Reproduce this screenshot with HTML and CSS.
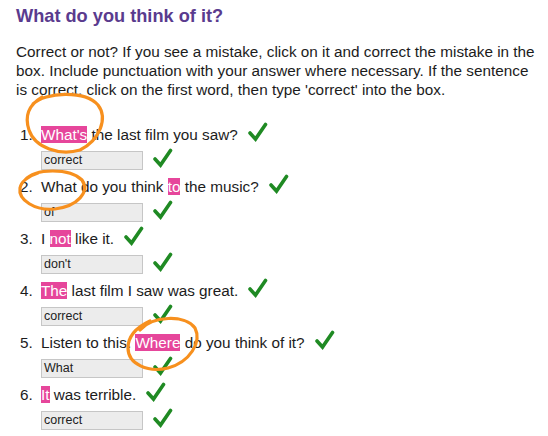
FILE: index.html
```html
<!DOCTYPE html>
<html>
<head>
<meta charset="utf-8">
<link rel="stylesheet" href="styles.css">
</head>
<body>
<div class="page">
  <h2 class="title">What do you think of it?</h2>
  <p class="intro">Correct or not? If you see a mistake, click on it and correct the mistake in the box. Include punctuation with your answer where necessary. If the sentence<br>is correct, click on the first word, then type 'correct' into the box.</p>
  <ol class="items">
    <li class="item">
      <div class="sentence"><span class="num">1.</span><span class="words"><span class="hl">What's</span> the last film you saw?</span><svg class="check" viewBox="0 0 20 20"><path d="M2 11 L7.5 17 L17.5 2.5"/></svg></div>
      <div class="answer"><span class="box">correct</span><svg class="check" viewBox="0 0 20 20"><path d="M2 11 L7.5 17 L17.5 2.5"/></svg></div>
    </li>
    <li class="item">
      <div class="sentence"><span class="num">2.</span><span class="words">What do you think <span class="hl">to</span> the music?</span><svg class="check" viewBox="0 0 20 20"><path d="M2 11 L7.5 17 L17.5 2.5"/></svg></div>
      <div class="answer"><span class="box">of</span><svg class="check" viewBox="0 0 20 20"><path d="M2 11 L7.5 17 L17.5 2.5"/></svg></div>
    </li>
    <li class="item">
      <div class="sentence"><span class="num">3.</span><span class="words">I <span class="hl">not</span> like it.</span><svg class="check" viewBox="0 0 20 20"><path d="M2 11 L7.5 17 L17.5 2.5"/></svg></div>
      <div class="answer"><span class="box">don't</span><svg class="check" viewBox="0 0 20 20"><path d="M2 11 L7.5 17 L17.5 2.5"/></svg></div>
    </li>
    <li class="item">
      <div class="sentence"><span class="num">4.</span><span class="words"><span class="hl">The</span> last film I saw was great.</span><svg class="check" viewBox="0 0 20 20"><path d="M2 11 L7.5 17 L17.5 2.5"/></svg></div>
      <div class="answer"><span class="box">correct</span><svg class="check" viewBox="0 0 20 20"><path d="M2 11 L7.5 17 L17.5 2.5"/></svg></div>
    </li>
    <li class="item">
      <div class="sentence"><span class="num">5.</span><span class="words">Listen to this. <span class="hl">Where</span> do you think of it?</span><svg class="check" viewBox="0 0 20 20"><path d="M2 11 L7.5 17 L17.5 2.5"/></svg></div>
      <div class="answer"><span class="box">What</span><svg class="check" viewBox="0 0 20 20"><path d="M2 11 L7.5 17 L17.5 2.5"/></svg></div>
    </li>
    <li class="item">
      <div class="sentence"><span class="num">6.</span><span class="words"><span class="hl">It</span> was terrible.</span><svg class="check" viewBox="0 0 20 20"><path d="M2 11 L7.5 17 L17.5 2.5"/></svg></div>
      <div class="answer"><span class="box">correct</span><svg class="check" viewBox="0 0 20 20"><path d="M2 11 L7.5 17 L17.5 2.5"/></svg></div>
    </li>
  </ol>
  <svg class="marks" viewBox="0 0 548 436">
    <path d="M33 104 C45 92, 85 90, 98 105 C108 118, 100 140, 80 150 C60 156, 35 148, 29 130 C25 118, 27 106, 42 97"/>
    <path d="M25 180 C35 168, 70 168, 82 180 C90 192, 78 206, 55 209 C35 211, 18 200, 20 188 C21 182, 28 176, 38 173"/>
    <path d="M140 330 C152 316, 185 314, 195 328 C202 342, 190 362, 168 368 C148 373, 128 364, 128 348 C128 338, 135 328, 150 321"/>
  </svg>
</div>
</body>
</html>
```

FILE: styles.css
```css
html, body {
  margin: 0;
  padding: 0;
  background: #ffffff;
}
.page {
  position: relative;
  width: 548px;
  height: 436px;
  overflow: hidden;
  padding: 0 0 0 16px;
  box-sizing: border-box;
  font-family: "Liberation Sans", Arial, sans-serif;
  color: #1c1c1c;
}
.title {
  margin: 0;
  padding-top: 5px;
  font-size: 18.2px;
  line-height: 22px;
  font-weight: bold;
  color: #5a3b8e;
}
.intro {
  margin: 15px 0 0 0;
  font-size: 15.3px;
  line-height: 19px;
  width: 528px;
}
.items {
  list-style: none;
  margin: 26px 0 0 0;
  padding: 0;
}
.item {
  margin-bottom: 7px;
}
.sentence {
  display: flex;
  align-items: center;
  height: 20px;
  font-size: 15.3px;
  margin-bottom: 6px;
}
.num {
  width: 25px;
  padding-left: 4px;
  box-sizing: border-box;
  flex: none;
}
.words {
  white-space: nowrap;
}
.hl {
  background: #e6469b;
  color: #ffffff;
}
.check {
  width: 20px;
  height: 20px;
  margin-left: 10px;
  flex: none;
  position: relative;
  top: -3px;
}
.check path {
  fill: none;
  stroke: #1f8a23;
  stroke-width: 3.6;
  stroke-linecap: round;
  stroke-linejoin: miter;
}
.answer {
  display: flex;
  align-items: center;
  height: 19px;
  padding-left: 25px;
}
.box {
  display: block;
  width: 102px;
  height: 19px;
  box-sizing: border-box;
  background: #ececec;
  border: 1px solid #c6c6c6;
  font-size: 12.5px;
  line-height: 17px;
  padding-left: 2px;
  color: #222;
}
.marks {
  position: absolute;
  left: 0;
  top: 0;
  width: 548px;
  height: 436px;
  pointer-events: none;
}
.marks path {
  fill: none;
  stroke: #f7901e;
  stroke-width: 3.2;
  stroke-linecap: round;
}
```
